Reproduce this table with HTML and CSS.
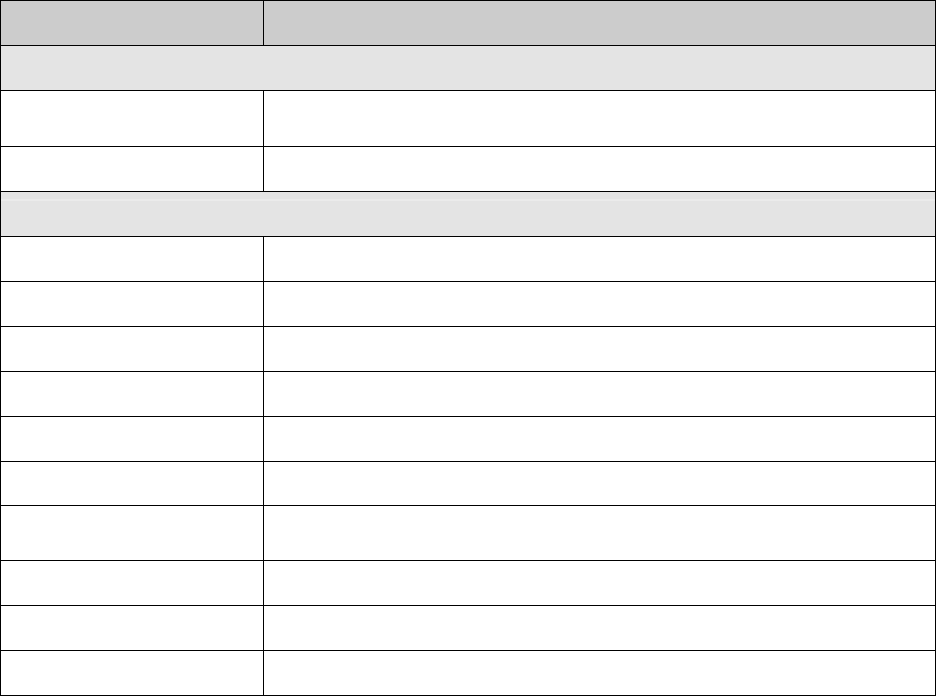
FILE: index.html
```html
<!DOCTYPE html>
<html>
<head>
<meta charset="utf-8">
<link rel="stylesheet" href="styles.css">
</head>
<body>
<table class="grid">
  <colgroup><col class="c1"><col class="c2"></colgroup>
  <tr class="head r45"><th></th><th></th></tr>
  <tr class="group r45"><td colspan="2"></td></tr>
  <tr class="r56"><td></td><td></td></tr>
  <tr class="r45"><td></td><td></td></tr>
  <tr class="group r45"><td colspan="2" class="band"></td></tr>
  <tr class="r45"><td></td><td></td></tr>
  <tr class="r45"><td></td><td></td></tr>
  <tr class="r45"><td></td><td></td></tr>
  <tr class="r45"><td></td><td></td></tr>
  <tr class="r45"><td></td><td></td></tr>
  <tr class="r44"><td></td><td></td></tr>
  <tr class="r55"><td></td><td></td></tr>
  <tr class="r45"><td></td><td></td></tr>
  <tr class="r45"><td></td><td></td></tr>
  <tr class="r45"><td></td><td></td></tr>
</table>
</body>
</html>
```
FILE: styles.css
```css
html, body {
  margin: 0;
  padding: 0;
  background: #ffffff;
  font-family: "Liberation Sans", Arial, sans-serif;
}
.grid {
  border-collapse: collapse;
  width: 936px;
  table-layout: fixed;
}
.c1 { width: 263px; }
.grid th, .grid td {
  border: 1px solid #000;
  padding: 0;
}
.head th { background: #cccccc; }
.group td { background: #e4e4e4; }
.group td.band {
  background: linear-gradient(to bottom, #e4e4e4 0, #e4e4e4 7px, #f2f2f2 7px, #f2f2f2 8px, #e4e4e4 8px);
}
.r44 { height: 44px; }
.r45 { height: 45px; }
.r55 { height: 55px; }
.r56 { height: 56px; }
```
